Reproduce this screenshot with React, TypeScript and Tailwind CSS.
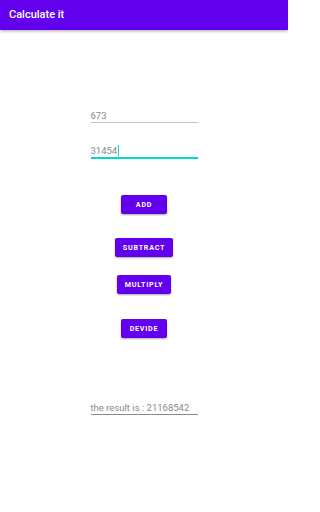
import React from "react";

const font = { fontFamily: "Roboto, 'Noto Sans', sans-serif" };

function ActionButton({ label }: { label: string }) {
  return (
    <button className="flex items-center justify-center min-w-[46px] h-[19px] px-[8px] rounded-[2px] bg-[#6200ee] text-white text-[7.2px] leading-none font-bold tracking-[0.1em] uppercase shadow-[0_1px_2px_rgba(0,0,0,0.35)]">
      {label}
    </button>
  );
}

export default function App() {
  return (
    <div className="w-[288px] h-[512px] bg-white flex flex-col overflow-hidden" style={font}>
      {/* app bar */}
      <div className="h-[30px] shrink-0 bg-[#6200ee] flex items-center px-[9px] shadow-[0_1px_3px_rgba(0,0,0,0.35)]">
        <span className="text-white text-[11px] font-medium">Calculate it</span>
      </div>

      <div className="flex flex-col items-center">
        <div className="w-[107px] mt-[78px] h-[15px] border-b border-[#c4c4c4] flex items-end pb-[2px]">
          <span className="text-[9.5px] leading-none text-[#8a8a8a]">673</span>
        </div>

        <div className="w-[107px] mt-[20px] h-[16px] border-b-2 border-[#03dac5] flex items-end pb-[2px]">
          <span className="text-[9.5px] leading-none text-[#8a8a8a]">31454</span>
          <span className="w-px h-[11px] bg-[#03dac5] ml-px mb-[-1px]" />
        </div>

        <div className="mt-[36px] flex">
          <ActionButton label="Add" />
        </div>
        <div className="mt-[24px] flex">
          <ActionButton label="Subtract" />
        </div>
        <div className="mt-[18px] flex">
          <ActionButton label="Multiply" />
        </div>
        <div className="mt-[25px] flex">
          <ActionButton label="Devide" />
        </div>

        <div className="w-[107px] mt-[62px] h-[15px] border-b border-[#8a8a8a] flex items-end pb-[2px]">
          <span className="text-[9.5px] leading-none text-[#8a8a8a]">the result is : 21168542</span>
        </div>
      </div>
    </div>
  );
}
